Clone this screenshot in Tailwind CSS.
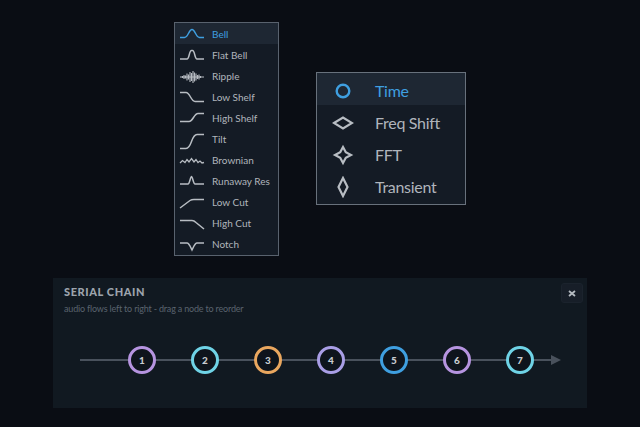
<!DOCTYPE html>
<html>
<head>
<meta charset="utf-8">
<script src="https://cdn.jsdelivr.net/npm/@tailwindcss/browser@4"></script>
</head>
<body class="m-0 bg-[#0a0d14]">
<div class="w-[640px] h-[427px] overflow-hidden flex flex-col font-['Lato',sans-serif] bg-[#0a0d14]">
  <div class="flex items-start pl-[174px] pt-[22px] h-[278px] shrink-0">
    <ul class="w-[105px] h-[234px] border border-[#59626e] bg-[#141b25] flex flex-col text-[10px] text-[#b0b5bc]">
      <li class="h-[21px] pt-[2px] flex items-center bg-[#1e2733] text-[#3f9fe0]"><svg class="w-[26px] h-[14px] ml-[4px] mr-[7px] overflow-visible" viewBox="0 0 26 14" fill="none" stroke="#3f9fe0" stroke-width="1.500"><path d="M1 9.500H5.500C9 9.500 10 1.500 13 1.500S17 9.500 20.500 9.500H25"/></svg>Bell</li>
      <li class="h-[21px] pt-[2px] flex items-center"><svg class="w-[26px] h-[14px] ml-[4px] mr-[7px] overflow-visible" viewBox="0 0 26 14" fill="none" stroke="#b8bdc3" stroke-width="1.500"><path d="M1 10H8C10.500 10 10 1.500 12.500 1.500H13.500C16 1.500 15.500 10 18 10H25"/></svg>Flat Bell</li>
      <li class="h-[21px] pt-[2px] flex items-center"><svg class="w-[26px] h-[14px] ml-[4px] mr-[7px] overflow-visible" viewBox="0 0 26 14" fill="none" stroke="#b8bdc3" stroke-width="1.100"><path d="M1 7H25M3.500 6V8M5 5V9M6.500 5.500V8.500M8 3.500V10.500M9.500 4.500V9.500M11 2V12M12.500 3V11M14 1V13M15.500 2.500V11.500M17 3.500V10.500M18.500 5V9M20 4.500V9.500M21.500 6V8"/></svg>Ripple</li>
      <li class="h-[21px] pt-[2px] flex items-center"><svg class="w-[26px] h-[14px] ml-[4px] mr-[7px] overflow-visible" viewBox="0 0 26 14" fill="none" stroke="#b8bdc3" stroke-width="1.500"><path d="M1 1.500H7C11 1.500 12 10.500 16 10.500H25"/></svg>Low Shelf</li>
      <li class="h-[21px] pt-[2px] flex items-center"><svg class="w-[26px] h-[14px] ml-[4px] mr-[7px] overflow-visible" viewBox="0 0 26 14" fill="none" stroke="#b8bdc3" stroke-width="1.500"><path d="M1 9.500H10C14 9.500 15 1.500 19 1.500H25"/></svg>High Shelf</li>
      <li class="h-[21px] pt-[2px] flex items-center"><svg class="w-[26px] h-[14px] ml-[4px] mr-[7px] overflow-visible" viewBox="0 0 26 14" fill="none" stroke="#b8bdc3" stroke-width="1.500"><path d="M1 15.500H7C13 15.500 12 1.500 18 1.500H25"/></svg>Tilt</li>
      <li class="h-[21px] pt-[2px] flex items-center"><svg class="w-[26px] h-[14px] ml-[4px] mr-[7px] overflow-visible" viewBox="0 0 26 14" fill="none" stroke="#b8bdc3" stroke-width="1.300"><path d="M1 9L3.500 6.500L6 8.500L8 5.500L10 8L12.500 4.500L15 8L17 5.500L19 8.500L21 7L23 9L25 8.500"/></svg>Brownian</li>
      <li class="h-[21px] pt-[2px] flex items-center"><svg class="w-[26px] h-[14px] ml-[4px] mr-[7px] overflow-visible" viewBox="0 0 26 14" fill="none" stroke="#b8bdc3" stroke-width="1.500"><path d="M1 9H9C10.500 9 11.500 1.500 12.500 1.500S14.500 9 16 9H25"/></svg>Runaway Res</li>
      <li class="h-[21px] pt-[2px] flex items-center"><svg class="w-[26px] h-[14px] ml-[4px] mr-[7px] overflow-visible" viewBox="0 0 26 14" fill="none" stroke="#b8bdc3" stroke-width="1.500"><path d="M1 12L11 4.500C12.500 3.500 13 3.500 15 3.500H25"/></svg>Low Cut</li>
      <li class="h-[21px] pt-[2px] flex items-center"><svg class="w-[26px] h-[14px] ml-[4px] mr-[7px] overflow-visible" viewBox="0 0 26 14" fill="none" stroke="#b8bdc3" stroke-width="1.500"><path d="M1 3.500H13C15 3.500 16 4.500 17 5.500L25 12"/></svg>High Cut</li>
      <li class="h-[21px] pt-[2px] flex items-center"><svg class="w-[26px] h-[14px] ml-[4px] mr-[7px] overflow-visible" viewBox="0 0 26 14" fill="none" stroke="#b8bdc3" stroke-width="1.500"><path d="M1 5H8C10 5 11 8 13 12C15 8 16 5 18 5H25"/></svg>Notch</li>
    </ul>
    <ul class="w-[150px] h-[133px] ml-[37px] mt-[50px] border border-[#68717c] bg-[#141b25] flex flex-col text-[16px] text-[#b0b5bc] tracking-[-0.3px]">
      <li class="h-[32px] pt-[4px] flex items-center bg-[#1e2733] text-[#3f9fe0]"><svg class="w-[22px] h-[22px] ml-[15px] mr-[21px]" viewBox="0 0 22 22" fill="none" stroke="#3f9fe0" stroke-width="2.400"><circle cx="11" cy="11" r="6.300"/></svg>Time</li>
      <li class="h-[32px] pt-[4px] flex items-center"><svg class="w-[22px] h-[22px] ml-[15px] mr-[21px]" viewBox="0 0 22 22" fill="none" stroke="#b8bdc3" stroke-width="2.200"><path d="M2 11L11 5.500L20 11L11 16.500Z"/></svg>Freq Shift</li>
      <li class="h-[32px] pt-[4px] flex items-center"><svg class="w-[22px] h-[22px] ml-[15px] mr-[21px]" viewBox="0 0 22 22" fill="none" stroke="#b8bdc3" stroke-width="2.200"><path d="M11 3L13.800 8.200L19 11L13.800 13.800L11 19L8.200 13.800L3 11L8.200 8.200Z"/></svg>FFT</li>
      <li class="h-[32px] pt-[4px] flex items-center"><svg class="w-[22px] h-[22px] ml-[15px] mr-[21px]" viewBox="0 0 22 22" fill="none" stroke="#b8bdc3" stroke-width="2.200"><path d="M11 2L15.500 11L11 20L6.500 11Z"/></svg>Transient</li>
    </ul>
  </div>
  <div class="ml-[53px] w-[534px] h-[130px] bg-[#111921] relative px-[11px] pt-[7px]">
    <div class="text-[11px] leading-[14px] font-black text-[#9da4ad] tracking-[0.6px]">SERIAL CHAIN</div>
    <div class="text-[9px] leading-[12px] mt-[4px] text-[#5a636e] tracking-[-0.18px]">audio flows left to right - drag a node to reorder</div>
    <button class="absolute right-[4px] top-[5px] w-[22px] h-[20px] rounded-[3px] bg-[#171e28] border border-[#1b232d] flex items-center justify-center"><svg class="w-[8px] h-[7px]" viewBox="0 0 8 7" stroke="#b4bac0" stroke-width="1.800"><path d="M1 1L7 6M7 1L1 6"/></svg></button>
    <div class="relative mt-[31px] ml-[16px] w-[481px] h-[28px] flex items-center">
      <div class="absolute left-0 right-[9px] top-[13px] h-[2px] bg-[#49515c]"></div>
      <div class="absolute right-0 top-[9px] w-0 h-0 border-y-[5px] border-y-transparent border-l-[10px] border-l-[#49515c]"></div>
      <div class="relative ml-[48px] flex gap-[35px] text-[10px] font-black text-[#c8ccd0]">
        <span class="w-[28px] h-[28px] rounded-full border-[3px] border-[#b694e0] bg-[#0e141c] flex items-center justify-center">1</span>
        <span class="w-[28px] h-[28px] rounded-full border-[3px] border-[#6fd3e6] bg-[#0e141c] flex items-center justify-center">2</span>
        <span class="w-[28px] h-[28px] rounded-full border-[3px] border-[#eaa75f] bg-[#0e141c] flex items-center justify-center">3</span>
        <span class="w-[28px] h-[28px] rounded-full border-[3px] border-[#a99ee6] bg-[#0e141c] flex items-center justify-center">4</span>
        <span class="w-[28px] h-[28px] rounded-full border-[3px] border-[#3f9fe0] bg-[#0e141c] flex items-center justify-center">5</span>
        <span class="w-[28px] h-[28px] rounded-full border-[3px] border-[#b694e0] bg-[#0e141c] flex items-center justify-center">6</span>
        <span class="w-[28px] h-[28px] rounded-full border-[3px] border-[#6fd3e6] bg-[#0e141c] flex items-center justify-center">7</span>
      </div>
    </div>
  </div>
</div>
</body>
</html>
